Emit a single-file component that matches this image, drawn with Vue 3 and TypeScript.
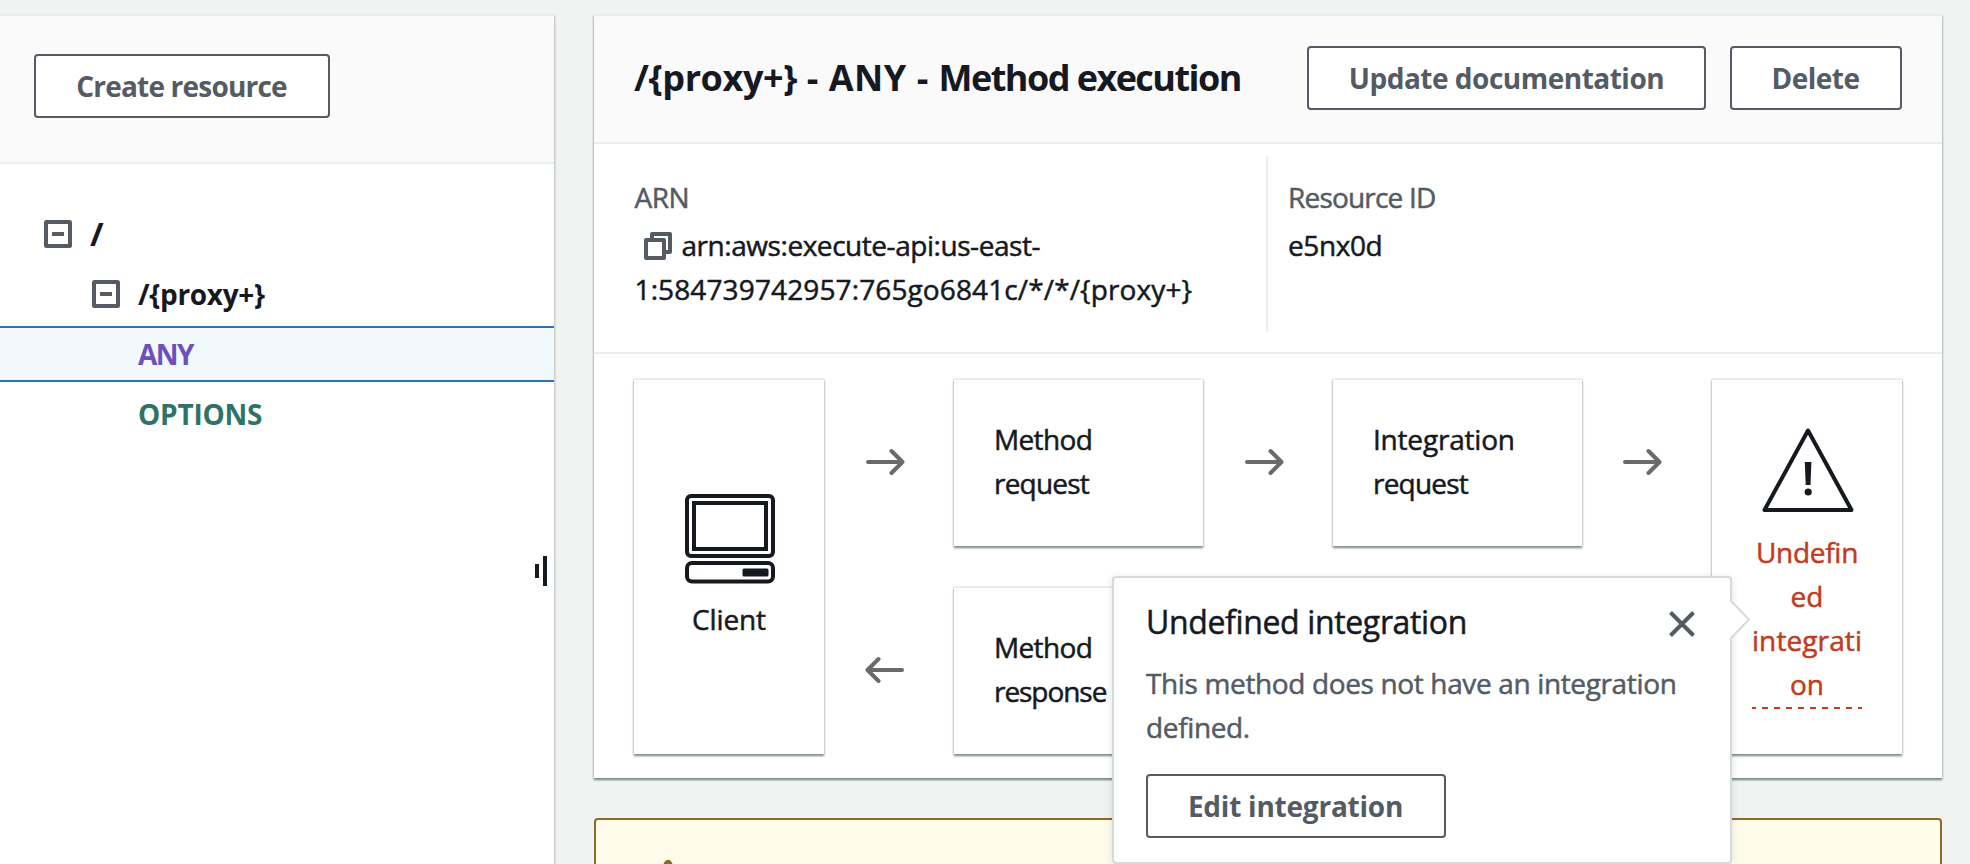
<script setup lang="ts">
import { ref } from 'vue'

interface TreeItem {
  label: string
  kind: 'root' | 'path' | 'any' | 'options'
  expandable: boolean
}

const tree: TreeItem[] = [
  { label: '/', kind: 'root', expandable: true },
  { label: '/{proxy+}', kind: 'path', expandable: true },
  { label: 'ANY', kind: 'any', expandable: false },
  { label: 'OPTIONS', kind: 'options', expandable: false },
]

const selected = ref('ANY')
const popoverOpen = ref(true)
</script>

<template>
  <div class="page">
    <aside class="sidebar">
      <header class="sidebar-header">
        <button class="btn create">Create resource</button>
      </header>
      <ul class="tree">
        <li
          v-for="item in tree"
          :key="item.label"
          :class="['node', item.kind, { selected: selected === item.label }]"
          @click="selected = item.label"
        >
          <svg v-if="item.expandable" class="toggle" viewBox="0 0 28 28">
            <rect x="2" y="2" width="24" height="24" rx="0.5" fill="none" stroke="#545b64" stroke-width="4" />
            <path d="M8 14h12" stroke="#545b64" stroke-width="4" />
          </svg>
          <span class="node-label">{{ item.label }}</span>
        </li>
      </ul>
      <div class="splitter"><i class="short"></i><i class="long"></i></div>
    </aside>

    <main class="content">
      <section class="panel">
        <header class="panel-header">
          <h2 class="title"><span class="title-path">/{proxy+}</span><span class="title-verb"> - ANY - </span><span class="title-name">Method execution</span></h2>
          <div class="actions">
            <button class="btn update">Update documentation</button>
            <button class="btn delete">Delete</button>
          </div>
        </header>

        <div class="details">
          <div class="detail arn">
            <div class="label">ARN</div>
            <div class="value">
              <svg class="copy" viewBox="0 0 28 28" fill="none" stroke="#545b64" stroke-width="4" stroke-linejoin="round">
                <path d="M8 6V2h18v18h-4" />
                <rect x="2" y="8" width="18" height="18" />
              </svg><span class="arn-a">arn:aws:execute-api:us-east-</span><br /><span class="arn-b">1:584739742957:765go6841c/*/*/{proxy+}</span>
            </div>
          </div>
          <div class="detail resource">
            <div class="label">Resource ID</div>
            <div class="value">e5nx0d</div>
          </div>
        </div>

        <div class="flow">
          <div class="card endpoint client">
            <svg class="client-icon" viewBox="0 0 90 90" fill="none" stroke="#16191f" stroke-width="4">
              <rect x="2" y="2" width="86" height="60" rx="4" />
              <rect x="9" y="9" width="72" height="46" />
              <rect x="2" y="69" width="86" height="18.5" rx="5" />
              <rect x="57.5" y="74.5" width="26" height="8" rx="1.5" fill="#16191f" stroke="none" />
            </svg>
            <span class="client-name">Client</span>
          </div>

          <div class="arrows">
            <div class="arrow-cell">
              <svg class="arrow" viewBox="0 0 40 28"><path d="M3 14h34M26.500 3l11 11-11 11" /></svg>
            </div>
            <div class="arrow-cell">
              <svg class="arrow" viewBox="0 0 40 28"><path d="M37 14H3M13.500 3l-11 11 11 11" /></svg>
            </div>
          </div>

          <div class="column">
            <div class="card step"><span class="t-method">Method</span><span class="t-request">request</span></div>
            <div class="card step"><span class="t-method">Method</span><span class="t-response">response</span></div>
          </div>

          <div class="arrows">
            <div class="arrow-cell">
              <svg class="arrow" viewBox="0 0 40 28"><path d="M3 14h34M26.500 3l11 11-11 11" /></svg>
            </div>
          </div>

          <div class="column">
            <div class="card step"><span class="t-integration">Integration</span><span class="t-request">request</span></div>
          </div>

          <div class="arrows">
            <div class="arrow-cell last">
              <svg class="arrow" viewBox="0 0 40 28"><path d="M3 14h34M26.500 3l11 11-11 11" /></svg>
            </div>
          </div>

          <div class="card endpoint undefined">
            <svg class="warn-icon" viewBox="0 0 92 84" fill="none" stroke="#16191f" stroke-width="4" stroke-linejoin="round">
              <path d="M46 2.500L2.500 82h87z" />
              <path d="M42.800 34h6.600l-.9 23h-4.800z" fill="#16191f" stroke="none" />
              <circle cx="46.200" cy="64" r="3.600" fill="#16191f" stroke="none" />
            </svg>
            <a class="undefined-link" @click="popoverOpen = true">
              <span class="t-undefin">Undefin</span><span>ed</span><span class="t-integrati">integrati</span><span>on</span>
            </a>
          </div>
        </div>
      </section>

      <section class="alert">
        <svg class="alert-icon" viewBox="0 0 32 32">
          <path d="M16 4L3 28h26z" fill="none" stroke="#8d6a20" stroke-width="8" stroke-linejoin="round" />
        </svg>
      </section>

      <div v-if="popoverOpen" class="popover">
        <svg class="pointer" viewBox="0 0 22 44">
          <path d="M0 3L19 21.500 0 40z" fill="#fff" />
          <path d="M1 3L19 21.500 1 40" fill="none" stroke="#d5dbdb" stroke-width="2" stroke-linejoin="round" />
        </svg>
        <div class="popover-head">
          <h3 class="popover-title">Undefined integration</h3>
          <button class="close" aria-label="Close" @click="popoverOpen = false">
            <svg viewBox="0 0 26 26"><path d="M1.500 1.500l23 23M24.500 1.500l-23 23" stroke="#545b64" stroke-width="4" /></svg>
          </button>
        </div>
        <p class="popover-text">This method does not have an integration<br />defined.</p>
        <button class="btn edit">Edit integration</button>
      </div>
    </main>
  </div>
</template>

<style>
body {
  margin: 0;
  background: #f2f3f3;
}
</style>

<style scoped>
.page {
  display: flex;
  gap: 40px;
  box-sizing: border-box;
  height: 864px;
  padding-top: 14px;
  overflow: hidden;
  background: #f1f3f3;
  color: #16191f;
  font-family: "Open Sans", "Noto Sans", sans-serif;
  font-size: 28px;
  line-height: 44px;
  -webkit-text-stroke: 0.5px currentColor;
}

/* Sidebar */
.sidebar {
  position: relative;
  flex: none;
  width: 554px;
  height: 900px;
  border-top: 2px solid #eaeded;
  box-sizing: border-box;
  background: #fff;
  box-shadow: 1px 2px 2px rgba(0, 28, 36, 0.25);
}
.sidebar-header {
  box-sizing: border-box;
  height: 148px;
  padding: 38px 34px;
  background: #fafafa;
  border-bottom: 2px solid #eaeded;
}
.btn {
  box-sizing: border-box;
  height: 64px;
  padding: 0;
  border: 2px solid #545b64;
  border-radius: 4px;
  background: #fff;
  color: #545b64;
  font: 700 28px/40px "Open Sans", "Noto Sans", sans-serif;
  -webkit-text-stroke: 0;
  white-space: nowrap;
}
.create { width: 296px; padding-right: 1px; letter-spacing: -0.8px; }
.update { width: 399px; letter-spacing: -0.5px; }
.delete { width: 172px; padding-right: 1px; letter-spacing: -0.5px; }

.tree {
  margin: 0;
  padding: 40px 0 0;
  list-style: none;
  font-weight: 700;
  -webkit-text-stroke: 0;
}
.node {
  display: flex;
  align-items: center;
  box-sizing: border-box;
  height: 60px;
}
.node-label { padding-bottom: 1px; }
.toggle { width: 28px; height: 28px; margin-right: 18px; }
.root { padding-left: 44px; }
.root .node-label { font-size: 33px; }
.path { padding-left: 92px; letter-spacing: -0.31px; }
.any { padding-left: 138px; color: #6f4fbc; letter-spacing: -1.54px; }
.options { padding-left: 138px; color: #2e7366; letter-spacing: -0.23px; }
.selected {
  height: 56px;
  margin: 2px 0;
  background: #f1f9fd;
  border: solid #2e73b8;
  border-width: 2px 0;
}
.splitter {
  position: absolute;
  right: 7px;
  top: 540px;
  display: flex;
  align-items: center;
  gap: 4px;
  height: 30px;
}
.splitter i { width: 4px; background: #16191f; }
.splitter .short { height: 14px; }
.splitter .long { height: 30px; }

/* Main panel */
.content {
  position: relative;
  flex: none;
  width: 1348px;
}
.panel {
  box-sizing: border-box;
  height: 764px;
  border-top: 2px solid #eaeded;
  background: #fff;
}
.panel,
.card {
  box-shadow:
    0 2px 2px rgba(0, 28, 36, 0.3),
    1px 2px 2px rgba(0, 28, 36, 0.15),
    -1px 2px 2px rgba(0, 28, 36, 0.15);
}
.panel-header {
  display: flex;
  align-items: center;
  justify-content: space-between;
  box-sizing: border-box;
  height: 128px;
  padding: 0 40px 2px;
  background: #fafafa;
  border-bottom: 2px solid #eaeded;
}
.title {
  margin: 0;
  padding-bottom: 1px;
  font-size: 36px;
  font-weight: 700;
  white-space: pre;
  -webkit-text-stroke: 0;
}
.title-path { letter-spacing: -0.4px; }
.title-verb { letter-spacing: 0.5px; }
.title-name { letter-spacing: -1.55px; }
.actions { display: flex; gap: 24px; }

.details {
  display: flex;
  box-sizing: border-box;
  height: 210px;
  border-bottom: 2px solid #eaeded;
}
.detail { box-sizing: border-box; }
.arn {
  width: 672px;
  padding: 31px 0 0 40.5px;
}
.resource {
  height: 176px;
  margin-top: 12px;
  padding: 19px 0 0 20px;
  border-left: 2px solid #eaeded;
}
.label { color: #545b64; margin-bottom: 4px; letter-spacing: -0.49px; }
.resource .label { letter-spacing: -0.8px; }
.resource .value { letter-spacing: -0.4px; }
.copy {
  width: 28px;
  height: 28px;
  margin: 0 9.5px 0 9.5px;
  vertical-align: -4px;
}
.arn-a { letter-spacing: -0.45px; }
.arn-b { letter-spacing: 0.12px; }

/* Request flow */
.flow {
  display: grid;
  grid-template-columns: 190px 130px 249px 130px 249px 130px 190px;
  height: 376px;
  padding: 24px 40px 0;
}
.card {
  box-sizing: border-box;
  background: #fff;
  border-top: 2px solid #eaeded;
}
.column,
.arrows {
  display: flex;
  flex-direction: column;
  gap: 40px;
}
.step,
.arrow-cell { height: 168px; }
.step {
  display: flex;
  flex-direction: column;
  padding: 37px 0 0 40px;
}
.arrow-cell {
  display: flex;
  align-items: center;
  justify-content: center;
  padding-right: 9px;
}
.arrow-cell.last { padding-right: 11px; }
.arrow {
  width: 40px;
  height: 28px;
  fill: none;
  stroke: #6a6a6d;
  stroke-width: 4;
  stroke-linecap: round;
  stroke-linejoin: round;
}
.t-method { letter-spacing: -0.65px; }
.t-request { letter-spacing: -0.8px; }
.t-response { letter-spacing: -1.05px; }
.t-integration { letter-spacing: -0.2px; }
.endpoint {
  display: flex;
  flex-direction: column;
  align-items: center;
}
.client { padding-top: 114px; }
.client-icon { width: 90px; height: 90px; margin-left: 2px; }
.client-name { margin-top: 13px; letter-spacing: -0.13px; }
.undefined { padding-top: 48px; }
.warn-icon { width: 92px; height: 84px; margin-left: 2px; }
.undefined-link {
  display: flex;
  flex-direction: column;
  align-items: center;
  width: 110px;
  margin-top: 18px;
  padding-bottom: 2.5px;
  background: repeating-linear-gradient(90deg, #c13b20 0 6px, transparent 6px 12px) -2px 100% / 120px 2px no-repeat;
  color: #c13b20;
  cursor: pointer;
}
.t-undefin { letter-spacing: -0.3px; }
.t-integrati { letter-spacing: 0.1px; }

/* Warning alert */
.alert {
  box-sizing: border-box;
  height: 140px;
  margin-top: 40px;
  padding: 40px 58px;
  border: 2px solid #8d6a20;
  border-radius: 4px;
  background: #fffceb;
}
.alert-icon { display: block; width: 32px; height: 32px; margin-left: -2px; overflow: visible; }

/* Popover */
.popover {
  position: absolute;
  left: 518px;
  top: 562px;
  box-sizing: border-box;
  width: 620px;
  height: 288px;
  padding: 22px 32px 0;
  border: 2px solid #d5dbdb;
  border-radius: 4px;
  background: #fff;
  box-shadow: 0 2px 8px rgba(0, 28, 36, 0.12);
}
.pointer {
  position: absolute;
  left: 616px;
  top: 20px;
  width: 22px;
  height: 44px;
}
.popover-head {
  display: flex;
  align-items: flex-start;
  justify-content: space-between;
}
.popover-title {
  margin: 0;
  font-size: 32px;
  font-weight: 400;
  line-height: 44px;
  letter-spacing: -0.36px;
}
.close {
  width: 26px;
  height: 26px;
  margin: 11px 3px 0 0;
  padding: 0;
  border: 0;
  background: none;
}
.close svg { display: block; }
.popover-text {
  margin: 17px 0 14px;
  color: #545b64;
  letter-spacing: -0.36px;
  white-space: nowrap;
}
.edit { width: 300px; margin-top: 11px; padding-right: 1px; letter-spacing: -0.23px; }
</style>
